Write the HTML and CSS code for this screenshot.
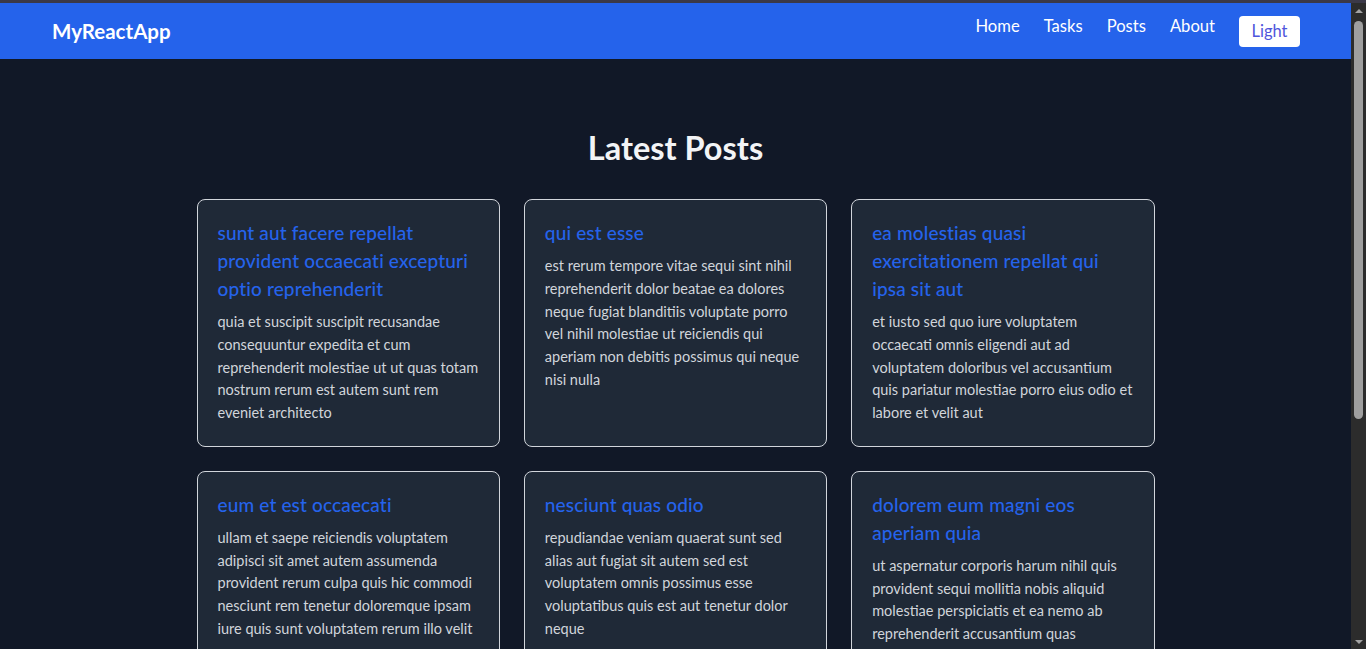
FILE: index.html
```html
<!DOCTYPE html>
<html lang="en">
<head>
<meta charset="utf-8">
<title>MyReactApp</title>
<link rel="stylesheet" href="styles.css">
</head>
<body>
<div class="topbar"></div>
<div class="app">
  <header class="navbar">
    <a class="brand" href="#">MyReactApp</a>
    <nav class="nav">
      <a class="nav-link" href="#">Home</a>
      <a class="nav-link" href="#">Tasks</a>
      <a class="nav-link" href="#">Posts</a>
      <a class="nav-link" href="#">About</a>
      <button class="theme-btn" type="button">Light</button>
    </nav>
  </header>
  <main class="page">
    <h1 class="page-title">Latest Posts</h1>
    <div class="post-grid">
      <article class="post-card">
        <h2 class="post-title">sunt aut facere repellat provident occaecati excepturi optio reprehenderit</h2>
        <p class="post-body">quia et suscipit suscipit recusandae consequuntur expedita et cum reprehenderit molestiae ut ut quas totam nostrum rerum est autem sunt rem eveniet architecto</p>
      </article>
      <article class="post-card">
        <h2 class="post-title">qui est esse</h2>
        <p class="post-body">est rerum tempore vitae sequi sint nihil reprehenderit dolor beatae ea dolores neque fugiat blanditiis voluptate porro vel nihil molestiae ut reiciendis qui aperiam non debitis possimus qui neque nisi nulla</p>
      </article>
      <article class="post-card">
        <h2 class="post-title">ea molestias quasi exercitationem repellat qui ipsa sit aut</h2>
        <p class="post-body">et iusto sed quo iure voluptatem occaecati omnis eligendi aut ad voluptatem doloribus vel accusantium quis pariatur molestiae porro eius odio et labore et velit aut</p>
      </article>
      <article class="post-card">
        <h2 class="post-title">eum et est occaecati</h2>
        <p class="post-body">ullam et saepe reiciendis voluptatem adipisci sit amet autem assumenda provident rerum culpa quis hic commodi nesciunt rem tenetur doloremque ipsam iure quis sunt voluptatem rerum illo velit</p>
      </article>
      <article class="post-card">
        <h2 class="post-title">nesciunt quas odio</h2>
        <p class="post-body">repudiandae veniam quaerat sunt sed alias aut fugiat sit autem sed est voluptatem omnis possimus esse voluptatibus quis est aut tenetur dolor neque</p>
      </article>
      <article class="post-card">
        <h2 class="post-title">dolorem eum magni eos aperiam quia</h2>
        <p class="post-body">ut aspernatur corporis harum nihil quis provident sequi mollitia nobis aliquid molestiae perspiciatis et ea nemo ab reprehenderit accusantium quas voluptate dolores velit et doloremque molestiae</p>
      </article>
      <article class="post-card">
        <h2 class="post-title">magnam facilis autem</h2>
        <p class="post-body">dolore placeat quibusdam ea quo vitae magni quis enim qui quis quo nemo aut saepe quidem repellat excepturi ut quia sunt ut sequi eos ea sed quas</p>
      </article>
      <article class="post-card">
        <h2 class="post-title">dolorem dolore est ipsam</h2>
        <p class="post-body">dignissimos aperiam dolorem qui eum facilis quibusdam animi sint suscipit qui sint possimus cum quaerat magni maiores excepturi ipsam ut commodi dolor voluptatum modi aut vitae</p>
      </article>
      <article class="post-card">
        <h2 class="post-title">nesciunt iure omnis dolorem tempora et accusantium</h2>
        <p class="post-body">consectetur animi nesciunt iure dolore enim quia ad veniam autem ut quam aut nobis et est aut quod aut provident voluptas autem voluptas</p>
      </article>
    </div>
  </main>
</div>
<div class="scrollbar" aria-hidden="true">
  <div class="scroll-btn"><span class="arrow-up"></span></div>
  <div class="scroll-thumb"></div>
  <div class="scroll-track"></div>
  <div class="scroll-btn"><span class="arrow-down"></span></div>
</div>
</body>
</html>
```

FILE: styles.css
```css
html {
  color-scheme: dark;
}

body {
  margin: 0;
  background: #111827;
  font-family: Lato, "Noto Sans", sans-serif;
  color: #d1d5db;
}

.topbar {
  height: 3px;
  background: #3b3948;
}

.app {
  margin-right: 15px;
}

.navbar {
  height: 56px;
  background: #2563eb;
  display: flex;
  align-items: center;
  justify-content: space-between;
  padding: 0 51px 0 52px;
}

.brand {
  color: #ffffff;
  font-weight: 700;
  font-size: 20.5px;
  text-decoration: none;
}

.nav {
  display: flex;
  align-items: center;
  gap: 24px;
}

.nav-link {
  color: #ffffff;
  font-size: 16.6px;
  text-decoration: none;
  margin-bottom: 10px;
}

.theme-btn {
  background: #ffffff;
  color: #4f55dc;
  border: 0;
  border-radius: 4px;
  font-family: Lato, "Noto Sans", sans-serif;
  font-size: 16.5px;
  height: 31px;
  width: 61px;
  padding: 0;
  cursor: pointer;
}

.page {
  padding: 71px 0 48px;
}

.page-title {
  margin: 0 0 33px;
  text-align: center;
  font-size: 32.5px;
  line-height: 36px;
  font-weight: 700;
  color: #f3f4f6;
}

.post-grid {
  max-width: 958px;
  margin: 0 auto;
  display: grid;
  grid-template-columns: repeat(3, 1fr);
  gap: 24px;
}

.post-card {
  background: #1f2937;
  border: 1px solid #d1d5db;
  border-radius: 8px;
  padding: 20px;
}

.post-title {
  margin: -1px 0 8px;
  color: #2563eb;
  font-size: 19px;
  letter-spacing: 0.15px;
  line-height: 28px;
  font-weight: 500;
}

.post-body {
  margin: 0 0 1px;
  color: #d1d5db;
  font-size: 14.5px;
  line-height: 22.75px;
}

/* imitation of the window's classic dark scrollbar */
.scrollbar {
  position: fixed;
  top: 3px;
  right: 0;
  bottom: 0;
  width: 15px;
  background: #2c2c2c;
  display: flex;
  flex-direction: column;
  align-items: center;
}

.scroll-btn {
  height: 15px;
  width: 15px;
  display: flex;
  align-items: center;
  justify-content: center;
}

.arrow-up {
  width: 0;
  height: 0;
  border-left: 4px solid transparent;
  border-right: 4px solid transparent;
  border-bottom: 4px solid #a3a3a3;
}

.arrow-down {
  width: 0;
  height: 0;
  border-left: 4px solid transparent;
  border-right: 4px solid transparent;
  border-top: 4px solid #a3a3a3;
}

.scroll-thumb {
  margin-top: 3px;
  width: 9px;
  height: 398px;
  border-radius: 5px;
  background: #9f9f9f;
}

.scroll-track {
  flex: 1;
}
```
